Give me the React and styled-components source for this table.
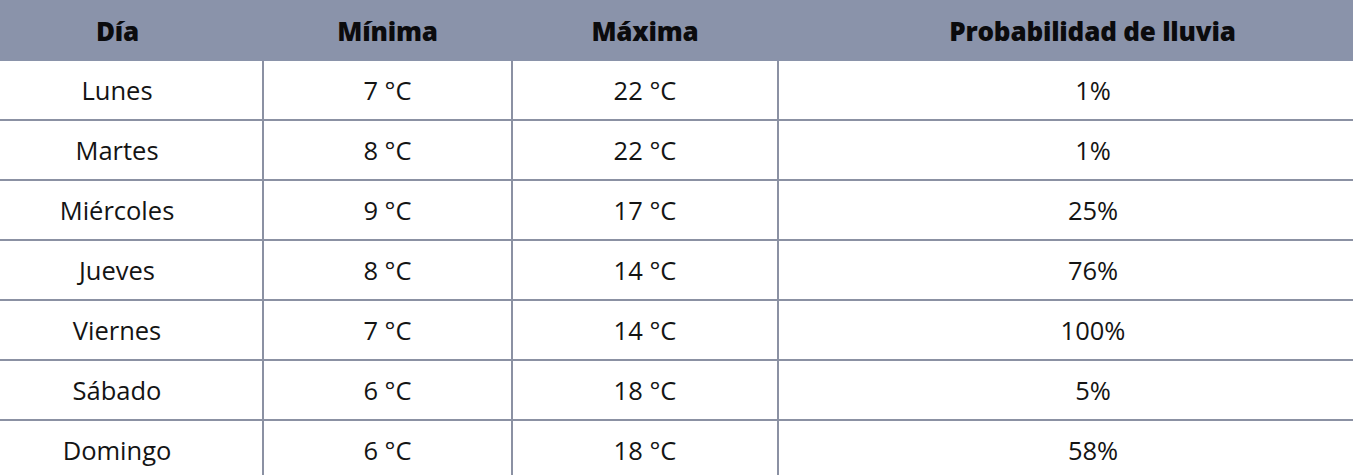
import React from 'react';
import styled, { createGlobalStyle } from 'styled-components';

const GlobalStyle = createGlobalStyle`
  html, body {
    margin: 0;
    padding: 0;
    background: #fff;
    overflow: hidden;
  }
  body {
    font-family: "Open Sans", "Noto Sans", sans-serif;
    color: #111;
  }
`;

// the table is wider than the window; the first and last columns run off both edges
const Viewport = styled.div`
  width: 1353px;
  overflow: hidden;
`;

const Table = styled.table`
  width: 1435px;
  margin-left: -28px;
  border-collapse: collapse;
  table-layout: fixed;
`;

const HeadCell = styled.th`
  width: ${p => p.$w}px;
  height: 61px;
  padding: 0;
  background: #8a93aa;
  color: #0b0b0d;
  font-size: 26px;
  font-weight: 800;
  letter-spacing: -0.2px;
  text-align: center;
  vertical-align: middle;
`;

const Row = styled.tr`
  & + & td {
    border-top: 2px solid #8b91a3;
  }
`;

const Cell = styled.td`
  height: 58px;
  padding: 0;
  font-size: 25.5px;
  color: #141414;
  text-align: center;
  vertical-align: middle;
  border-left: 2px solid #8b91a3;

  &:first-child {
    border-left: none;
  }
`;

const columns = [
  { label: 'Día', width: 291 },
  { label: 'Mínima', width: 249 },
  { label: 'Máxima', width: 266 },
  { label: 'Probabilidad de lluvia', width: 629 },
];

const days = [
  ['Lunes', '7 °C', '22 °C', '1%'],
  ['Martes', '8 °C', '22 °C', '1%'],
  ['Miércoles', '9 °C', '17 °C', '25%'],
  ['Jueves', '8 °C', '14 °C', '76%'],
  ['Viernes', '7 °C', '14 °C', '100%'],
  ['Sábado', '6 °C', '18 °C', '5%'],
  ['Domingo', '6 °C', '18 °C', '58%'],
];

export default function App() {
  return (
    <>
      <GlobalStyle />
      <Viewport>
        <Table>
          <thead>
            <tr>
              {columns.map(c => (
                <HeadCell key={c.label} $w={c.width}>{c.label}</HeadCell>
              ))}
            </tr>
          </thead>
          <tbody>
            {days.map(row => (
              <Row key={row[0]}>
                {row.map((v, i) => <Cell key={i}>{v}</Cell>)}
              </Row>
            ))}
          </tbody>
        </Table>
      </Viewport>
    </>
  );
}
